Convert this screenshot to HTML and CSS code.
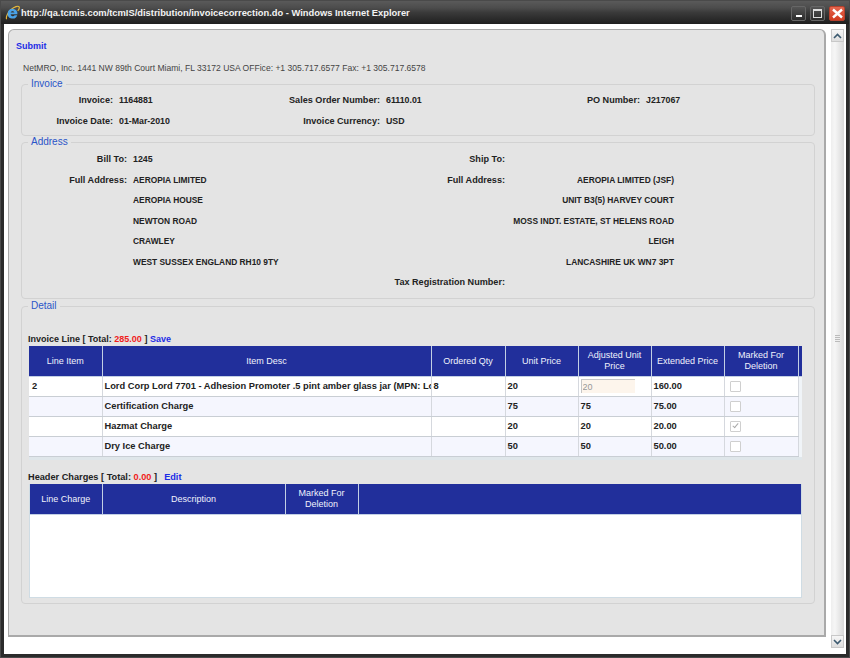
FILE: index.html
```html
<!DOCTYPE html>
<html lang="en">
<head>
    <meta charset="UTF-8">
    <title>Invoice Correction</title>
    <link rel="stylesheet" href="styles.css">
</head>
<body>
<div class="window">
    <!-- Title bar -->
    <div class="titlebar">
        <svg class="ie-icon" width="15" height="16" viewBox="0 0 17 17">
            <path d="M2 15.5C0.5 14 3 8 7 4.5C10.5 1.5 15 0 16 1.5C16.6 2.6 15.6 4.6 14.4 6" fill="none" stroke="#e8b93a" stroke-width="1.3"/>
            <path d="M8.5 3.6a5.6 5.6 0 0 1 5.6 6.3H6.4a2.4 2.4 0 0 0 4.5 1.1h3a5.6 5.6 0 1 1-5.4-7.4zM6.4 7.9h4.3a2.2 2.2 0 0 0-4.3 0z" fill="#4aa3e8"/>
        </svg>
        <span class="title-text">http://qa.tcmis.com/tcmIS/distribution/invoicecorrection.do - Windows Internet Explorer</span>
        <div class="win-buttons">
            <span class="win-btn"><i class="min-bar"></i></span>
            <span class="win-btn"><i class="max-box"></i></span>
            <span class="win-btn win-close">
                <svg width="13" height="11" viewBox="0 0 13 11"><path d="M2 1.5L11 9.5M11 1.5L2 9.5" stroke="#fff" stroke-width="2.4"/></svg>
            </span>
        </div>
    </div>

    <div class="client">
        <div class="page">
            <a class="submit-link" href="#">Submit</a>
            <p class="company">NetMRO, Inc. 1441 NW 89th Court Miami, FL 33172 USA OFFice: +1 305.717.6577 Fax: +1 305.717.6578</p>

            <fieldset class="box box-invoice">
                <legend>Invoice</legend>
                <table class="info-table">
                    <colgroup>
                        <col class="inv-c1"><col class="inv-c2"><col class="inv-c3"><col class="inv-c4"><col class="inv-c5"><col>
                    </colgroup>
                    <tr>
                        <td class="lbl">Invoice:</td><td class="val">1164881</td>
                        <td class="lbl">Sales Order Number:</td><td class="val">61110.01</td>
                        <td class="lbl">PO Number:</td><td class="val">J217067</td>
                    </tr>
                    <tr>
                        <td class="lbl">Invoice Date:</td><td class="val">01-Mar-2010</td>
                        <td class="lbl">Invoice Currency:</td><td class="val">USD</td>
                        <td></td><td></td>
                    </tr>
                </table>
            </fieldset>

            <fieldset class="box box-address">
                <legend>Address</legend>
                <table class="info-table">
                    <colgroup>
                        <col class="adr-c1"><col class="adr-c2"><col class="adr-c3"><col class="adr-c4"><col>
                    </colgroup>
                    <tr><td class="lbl">Bill To:</td><td class="val">1245</td><td class="lbl">Ship To:</td><td></td><td></td></tr>
                    <tr><td class="lbl">Full Address:</td><td class="caps">AEROPIA LIMITED</td><td class="lbl">Full Address:</td><td class="caps val-right">AEROPIA LIMITED (JSF)</td><td></td></tr>
                    <tr><td></td><td class="caps">AEROPIA HOUSE</td><td></td><td class="caps val-right">UNIT B3(5) HARVEY COURT</td><td></td></tr>
                    <tr><td></td><td class="caps">NEWTON ROAD</td><td></td><td class="caps val-right">MOSS INDT. ESTATE, ST HELENS ROAD</td><td></td></tr>
                    <tr><td></td><td class="caps">CRAWLEY</td><td></td><td class="caps val-right">LEIGH</td><td></td></tr>
                    <tr><td></td><td class="caps">WEST SUSSEX ENGLAND RH10 9TY</td><td></td><td class="caps val-right">LANCASHIRE UK WN7 3PT</td><td></td></tr>
                    <tr><td></td><td></td><td class="lbl">Tax Registration Number:</td><td></td><td></td></tr>
                </table>
            </fieldset>

            <fieldset class="box box-detail">
                <legend>Detail</legend>

                <div class="grid-caption caption-lines">Invoice Line [ Total: <span class="total">285.00</span> ] <a href="#">Save</a></div>
                <div class="grid">
                    <table class="grid-table lines-table">
                        <colgroup>
                            <col class="c-item"><col class="c-desc"><col class="c-wide"><col class="c-num"><col class="c-num"><col class="c-num"><col class="c-wide"><col class="c-strip">
                        </colgroup>
                        <thead>
                            <tr>
                                <th>Line Item</th><th>Item Desc</th><th>Ordered Qty</th><th>Unit Price</th>
                                <th>Adjusted Unit Price</th><th>Extended Price</th><th>Marked For Deletion</th><th class="strip"></th>
                            </tr>
                        </thead>
                        <tbody>
                            <tr>
                                <td>2</td><td class="desc">Lord Corp Lord 7701 - Adhesion Promoter .5 pint amber glass jar (MPN: Lord 7701)</td><td>8</td><td>20</td>
                                <td><input class="price-input" type="text" value="20" disabled></td><td>160.00</td><td><input class="chk" type="checkbox" disabled></td>
                            </tr>
                            <tr class="alt">
                                <td></td><td>Certification Charge</td><td></td><td>75</td><td>75</td><td>75.00</td><td><input class="chk" type="checkbox" disabled></td>
                            </tr>
                            <tr>
                                <td></td><td>Hazmat Charge</td><td></td><td>20</td><td>20</td><td>20.00</td><td><input class="chk" type="checkbox" checked disabled></td>
                            </tr>
                            <tr class="alt">
                                <td></td><td>Dry Ice Charge</td><td></td><td>50</td><td>50</td><td>50.00</td><td><input class="chk" type="checkbox" disabled></td>
                            </tr>
                        </tbody>
                    </table>
                </div>

                <div class="grid-caption caption-charges">Header Charges [ Total: <span class="total">0.00</span> ] &nbsp;<a class="edit-link" href="#">Edit</a></div>
                <div class="grid charges-grid">
                    <table class="grid-table charges-table">
                        <colgroup>
                            <col class="c-chitem"><col class="c-chdesc"><col class="c-num"><col>
                        </colgroup>
                        <thead>
                            <tr><th>Line Charge</th><th>Description</th><th>Marked For Deletion</th><th></th></tr>
                        </thead>
                    </table>
                </div>
            </fieldset>
        </div>

        <!-- Scrollbar -->
        <div class="scrollbar">
            <div class="scroll-btn"><svg width="9" height="6" viewBox="0 0 9 6"><path d="M1 5L4.5 1.5L8 5" fill="none" stroke="#3c5a70" stroke-width="1.6"/></svg></div>
            <div class="scroll-thumb"><i class="grip"></i></div>
            <div class="scroll-btn"><svg width="9" height="6" viewBox="0 0 9 6"><path d="M1 1L4.5 4.5L8 1" fill="none" stroke="#3c5a70" stroke-width="1.6"/></svg></div>
        </div>
    </div>
</div>
</body>
</html>
```

FILE: styles.css
```css
html, body {
    margin: 0;
    height: 100%;
    overflow: hidden;
}

body {
    font-family: "Liberation Sans", Arial, sans-serif;
    font-size: 9px;
    font-weight: bold;
    color: #222;
}

a {
    color: #1c2ce6;
    text-decoration: none;
}

.window {
    display: flex;
    flex-direction: column;
    box-sizing: border-box;
    width: 850px;
    height: 658px;
    background-color: #2b2b2b;
    border: 1px solid #4a4a4a;
    padding: 0 3px 3px 3px;
}

/* Title bar */
.titlebar {
    display: flex;
    align-items: center;
    height: 23px;
    margin: 0 -3px;
    padding: 0 4px 0 4px;
    background: linear-gradient(#5a5a5a 0, #4c4c4c 30%, #3a3a3a 50%, #1f1f1f 100%);
}

.ie-icon {
    flex: none;
    margin-right: 1px;
}

.title-text {
    flex: 1;
    color: #f2f2f2;
    font-size: 9.35px;
    white-space: nowrap;
}

.win-buttons {
    display: flex;
    gap: 4px;
    margin-top: 2px;
}

.win-btn {
    display: flex;
    align-items: center;
    justify-content: center;
    box-sizing: border-box;
    width: 15px;
    height: 15px;
    border: 1px solid #666;
    border-radius: 2px;
    background: linear-gradient(#555, #2c2c2c);
}

.win-close {
    width: 16px;
    border-color: #b5402c;
    background: linear-gradient(#e4664f, #d23c20);
}

.min-bar {
    display: block;
    width: 6px;
    height: 2px;
    margin-top: 5px;
    background-color: #fff;
}

.max-box {
    display: block;
    box-sizing: border-box;
    width: 9px;
    height: 9px;
    border: 1px solid #ddd;
    border-top-width: 2px;
}

/* Client area */
.client {
    flex: 1;
    display: flex;
    background-color: #fff;
    padding: 5px 2px 6px 4px;
}

.page {
    box-sizing: border-box;
    width: 818px;
    height: 608px;
    padding: 10px 10px 0 8px;
    background-color: #e4e4e4;
    border: 1px solid #a9a9a9;
    border-bottom-width: 2px;
    border-right-width: 2px;
    border-top-right-radius: 6px;
    border-top-left-radius: 6px;
}

.submit-link {
    display: block;
    line-height: 12px;
    margin-left: -1px;
}

.company {
    margin: 10px 0 0 6px;
    font-size: 8.55px;
    font-weight: normal;
    color: #444;
    line-height: 12px;
}

/* Field groups */
.box {
    margin: 0 0 0 4px;
    padding: 0;
    min-width: 0;
    width: 794px;
    box-sizing: border-box;
    border: 1px solid #d2d2d2;
    border-radius: 4px;
}

.box legend {
    margin-left: 6px;
    padding: 0 3px;
    color: #2a55c8;
    font-weight: normal;
    font-size: 10px;
    line-height: 12px;
}

.box-invoice {
    height: 58px;
    margin-top: 4px;
}

.box-address {
    height: 163px;
}

.box-detail {
    height: 304px;
    margin-top: 1px;
}

.info-table {
    table-layout: fixed;
    width: 100%;
    margin-top: 1px;
    border-collapse: collapse;
}

.box-invoice .info-table {
    margin-top: 0;
}

.info-table td {
    height: 20.5px;
    padding: 0;
    white-space: nowrap;
}

.lbl {
    font-size: 9.1px;
    text-align: right;
    padding-right: 6px !important;
}

.val {
    font-size: 8.8px;
}

.caps {
    font-size: 8.4px;
}

.val-right {
    text-align: right;
}

.inv-c1 { width: 97px; }
.inv-c2 { width: 170px; }
.inv-c3 { width: 97px; }
.inv-c4 { width: 180px; }
.inv-c5 { width: 80px; }

.adr-c1 { width: 111px; }
.adr-c2 { width: 258px; }
.adr-c3 { width: 120px; }
.adr-c4 { width: 163px; }

/* Grids */
.grid-caption {
    line-height: 13px;
    margin-left: 6px;
    color: #222;
}

.caption-lines {
    margin-top: 21px;
}

.caption-charges {
    margin-top: 11px;
    font-size: 9.2px;
}

.edit-link {
    margin-left: 2px;
}

.total {
    color: #f01c1c;
}

.grid {
    box-sizing: border-box;
    width: 773px;
    margin-left: 7px;
    background-color: #f0f4f8;
    border-bottom: 3px solid #dfe6ea;
}

.charges-grid {
    height: 114px;
    background-color: #fff;
    border: 1px solid #cfdce4;
    border-top: 0;
}

.grid-table {
    table-layout: fixed;
    width: 100%;
    border-collapse: collapse;
}

.grid-table th {
    height: 30px;
    padding: 0 3px;
    background-color: #212f9b;
    color: #f0f2fb;
    font-size: 9px;
    font-weight: normal;
    line-height: 11px;
    text-align: center;
    border-right: 1px solid #c2cfe4;
    border-bottom: 1px solid #c2cfe4;
}

.grid-table th.strip {
    padding: 0;
    border-right: 0;
}

.charges-table th:last-child {
    border-right: 0;
}

.grid-table td {
    height: 20px;
    padding: 0 2px 1px 2px;
    box-sizing: border-box;
    font-size: 9.3px;
    background-color: #fff;
    border-right: 1px solid #d5d8de;
    border-bottom: 1px solid #c9ced4;
    white-space: nowrap;
    overflow: hidden;
}

.grid-table td:first-child {
    padding-left: 3px;
}

.grid-table .alt td {
    background-color: #f5f6fe;
}

.c-item { width: 73px; }
.c-desc { width: 329px; }
.c-wide { width: 74px; }
.c-num { width: 73px; }
.c-strip { width: 4px; }
.c-chitem { width: 72px; }
.c-chdesc { width: 183px; }

.price-input {
    display: block;
    box-sizing: border-box;
    width: 54px;
    height: 14px;
    margin: 0;
    padding: 0 1px;
    font: normal 9px "Liberation Sans", Arial, sans-serif;
    color: #999;
    background-color: #fdf5ec;
    border: 1px solid #c6c6c6;
    border-right: 0;
    border-bottom: 0;
}

.chk {
    appearance: none;
    position: relative;
    display: block;
    box-sizing: border-box;
    width: 11px;
    height: 11px;
    margin: 0 0 0 3px;
    background-color: #fff;
    border: 1px solid #cfcfcf;
    border-radius: 1px;
}

/* tick of a checked box */
.chk:checked::after {
    content: "";
    position: absolute;
    left: 3px;
    top: 0;
    width: 2px;
    height: 5px;
    border-right: 1px solid #aaa;
    border-bottom: 1px solid #aaa;
    transform: rotate(40deg);
}

/* Scrollbar */
.scrollbar {
    display: flex;
    flex-direction: column;
    width: 13px;
    margin-left: 5px;
}

.scroll-btn {
    display: flex;
    align-items: center;
    justify-content: center;
    height: 13px;
    background: linear-gradient(#f6f6f6, #dedede);
    border: 1px solid #c8c8c8;
    box-sizing: border-box;
}

.scroll-thumb {
    flex: 1;
    display: flex;
    align-items: center;
    justify-content: center;
    background: linear-gradient(90deg, #eee, #f6f6f6 30%, #d8d8d8);
}

.grip {
    display: block;
    width: 5px;
    height: 7px;
    background: repeating-linear-gradient(#bbb 0 1px, #eee 1px 2px);
}
```
